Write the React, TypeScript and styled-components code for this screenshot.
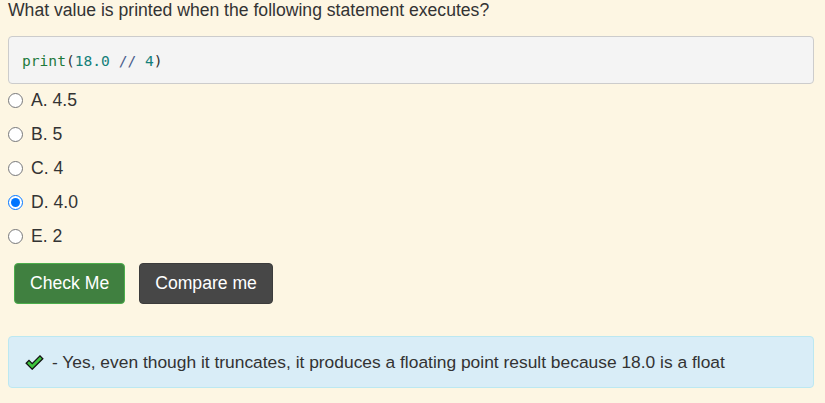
import React from "react";
import styled, { createGlobalStyle } from "styled-components";

const Global = createGlobalStyle`
  html, body { margin: 0; padding: 0; background: #fdf6e3; }
  body { font-family: "Liberation Sans", Arial, sans-serif; color: #333; }
`;

const Page = styled.div`
  width: 806px;
  padding: 0 0 0 8px;
  display: flex;
  flex-direction: column;
`;

const Question = styled.p`
  margin: 0;
  font-size: 17.6px;
  line-height: 20px;
  color: #333;
`;

const CodeBox = styled.pre`
  margin: 16px 0 0;
  box-sizing: border-box;
  height: 48px;
  padding: 0 13px;
  display: flex;
  align-items: center;
  background: #f4f4f4;
  border: 1px solid #ccc;
  border-radius: 4px;
  font-family: "DejaVu Sans Mono", monospace;
  font-size: 14.6px;
  color: #333;
`;

const Tok = styled.span<{ $c: string }>`
  color: ${(p) => p.$c};
`;

const Options = styled.div`
  display: flex;
  flex-direction: column;
  margin-top: 1px;
`;

const Option = styled.label`
  display: flex;
  align-items: center;
  height: 20px;
  padding-top: 5px;
  margin-bottom: 9px;
  font-size: 17.6px;
  color: #333;
  gap: 8px;
`;

const Radio = styled.input`
  margin: 0;
  width: 15px;
  height: 15px;
  accent-color: #0075ff;
`;

const Buttons = styled.div`
  display: flex;
  gap: 14px;
  margin: 8px 0 0 6px;
`;

const Btn = styled.button<{ $variant: "green" | "dark" }>`
  box-sizing: border-box;
  height: 41px;
  padding: 0 15px;
  border-radius: 4px;
  font-family: "Liberation Sans", Arial, sans-serif;
  font-size: 17.6px;
  color: #fff;
  cursor: pointer;
  background: ${(p) => (p.$variant === "green" ? "#408040" : "#474747")};
  border: 1px solid ${(p) => (p.$variant === "green" ? "#4cae4c" : "#3c3c3c")};
`;

const Feedback = styled.div`
  margin-top: 32px;
  box-sizing: border-box;
  height: 52px;
  display: flex;
  align-items: center;
  gap: 8px;
  padding: 0 16px;
  background: #d9edf7;
  border: 1px solid #bce8f1;
  border-radius: 4px;
  font-size: 17.4px;
  color: #333;
`;

const CheckIcon = () => (
  <svg width="19" height="15" viewBox="0 0 19 15">
    <path
      d="M1.2 8.2 L4 5.4 L7.2 8.6 L15 0.9 L17.8 3.7 L7.2 14.2 Z"
      fill="#3ec43e"
      stroke="#111"
      strokeWidth="1.3"
      strokeLinejoin="miter"
    />
  </svg>
);

const opts = ["A. 4.5", "B. 5", "C. 4", "D. 4.0", "E. 2"];

export default function App() {
  return (
    <>
      <Global />
      <Page>
        <Question>What value is printed when the following statement executes?</Question>
        <CodeBox>
          <Tok $c="#1d7a3c">print</Tok>
          <Tok $c="#333">(</Tok>
          <Tok $c="#14807a">18.0</Tok>
          <Tok $c="#333"> </Tok>
          <Tok $c="#4b5d8c">//</Tok>
          <Tok $c="#333"> </Tok>
          <Tok $c="#14807a">4</Tok>
          <Tok $c="#333">)</Tok>
        </CodeBox>
        <Options>
          {opts.map((o, i) => (
            <Option key={o}>
              <Radio type="radio" name="q" defaultChecked={i === 3} />
              {o}
            </Option>
          ))}
        </Options>
        <Buttons>
          <Btn $variant="green">Check Me</Btn>
          <Btn $variant="dark">Compare me</Btn>
        </Buttons>
        <Feedback>
          <CheckIcon />
          <span>- Yes, even though it truncates, it produces a floating point result because 18.0 is a float</span>
        </Feedback>
      </Page>
    </>
  );
}
